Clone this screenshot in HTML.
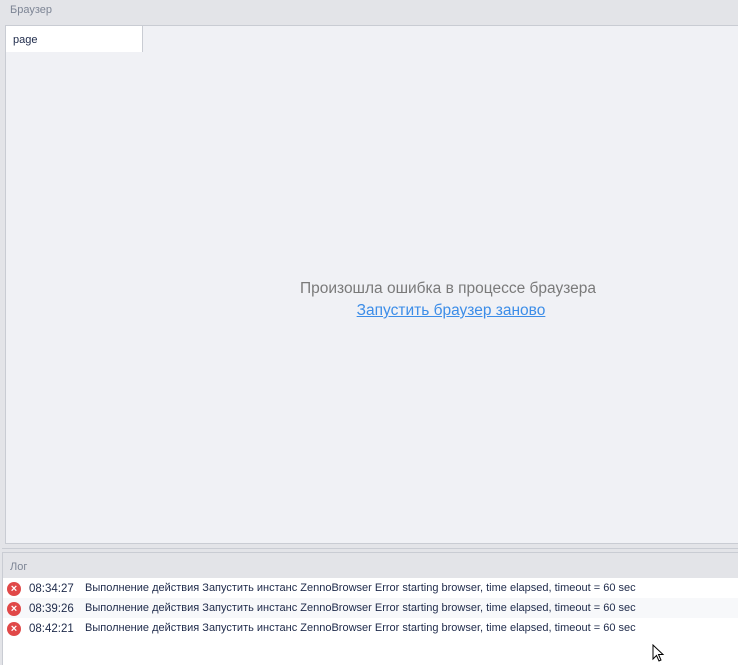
<!DOCTYPE html>
<html><head><meta charset="utf-8"><style>
body{margin:0;width:738px;height:665px;background:#e3e4e8;font-family:"Liberation Sans",sans-serif;position:relative;overflow:hidden}
.a{position:absolute}
.row{position:absolute;left:3px;width:735px;height:20px;font-size:11px;color:#1e2a4a}
.ic{position:absolute;left:4px;top:4px;width:14px;height:14px;border-radius:50%;background:#e04848;color:#fff;font-size:11px;line-height:14px;text-align:center;font-weight:bold}
.t{position:absolute;left:26px;top:5px;font-size:11.5px}
.m{position:absolute;left:82px;top:4px;white-space:nowrap}
</style></head><body>
<div class="a" style="left:10px;top:4px;font-size:11px;color:#7d8595">Браузер</div>
<div class="a" style="left:5px;top:25px;width:733px;height:519px;border:1px solid #c9ccd3;border-right:none;background:#f0f1f5;box-sizing:border-box"></div>
<div class="a" style="left:5px;top:25px;width:138px;height:27px;background:#fff;border:1px solid #c9ccd3;border-bottom:none;box-sizing:border-box"></div>
<div class="a" style="left:13px;top:34px;font-size:11px;color:#1e2a4a">page</div>
<div class="a" style="left:0;top:280px;width:896px;text-align:center;font-size:15.5px;color:#7a7a7a">Произошла ошибка в процессе браузера</div>
<div class="a" style="left:0;top:302px;width:902px;text-align:center;font-size:15.5px;color:#3c8de8;text-decoration:underline">Запустить браузер заново</div>
<div class="a" style="left:2px;top:548px;width:736px;height:1px;background:#c9ccd3"></div>
<div class="a" style="left:2px;top:552px;width:736px;height:113px;border-left:1px solid #c9ccd3;border-top:1px solid #c9ccd3;background:#fff;box-sizing:border-box"></div>
<div class="a" style="left:3px;top:553px;width:735px;height:25px;background:#e3e4e8"></div>
<div class="a" style="left:10px;top:561px;font-size:11px;color:#7d8595">Лог</div>
<div class="row" style="top:578px;background:#fff"><div class="ic">×</div><div class="t">08:34:27</div><div class="m">Выполнение действия Запустить инстанс ZennoBrowser Error starting browser, time elapsed, timeout = 60 sec</div></div>
<div class="row" style="top:598px;background:#f7f8fa"><div class="ic">×</div><div class="t">08:39:26</div><div class="m">Выполнение действия Запустить инстанс ZennoBrowser Error starting browser, time elapsed, timeout = 60 sec</div></div>
<div class="row" style="top:618px;background:#fff"><div class="ic">×</div><div class="t">08:42:21</div><div class="m">Выполнение действия Запустить инстанс ZennoBrowser Error starting browser, time elapsed, timeout = 60 sec</div></div>
<svg class="a" style="left:652px;top:644px" width="14" height="20"><path d="M1 1 L1 15 L4.5 11.5 L7 17 L9 16 L6.5 10.5 L11 10.5 Z" fill="#fff" stroke="#000" stroke-width="1"/></svg>
</body></html>
